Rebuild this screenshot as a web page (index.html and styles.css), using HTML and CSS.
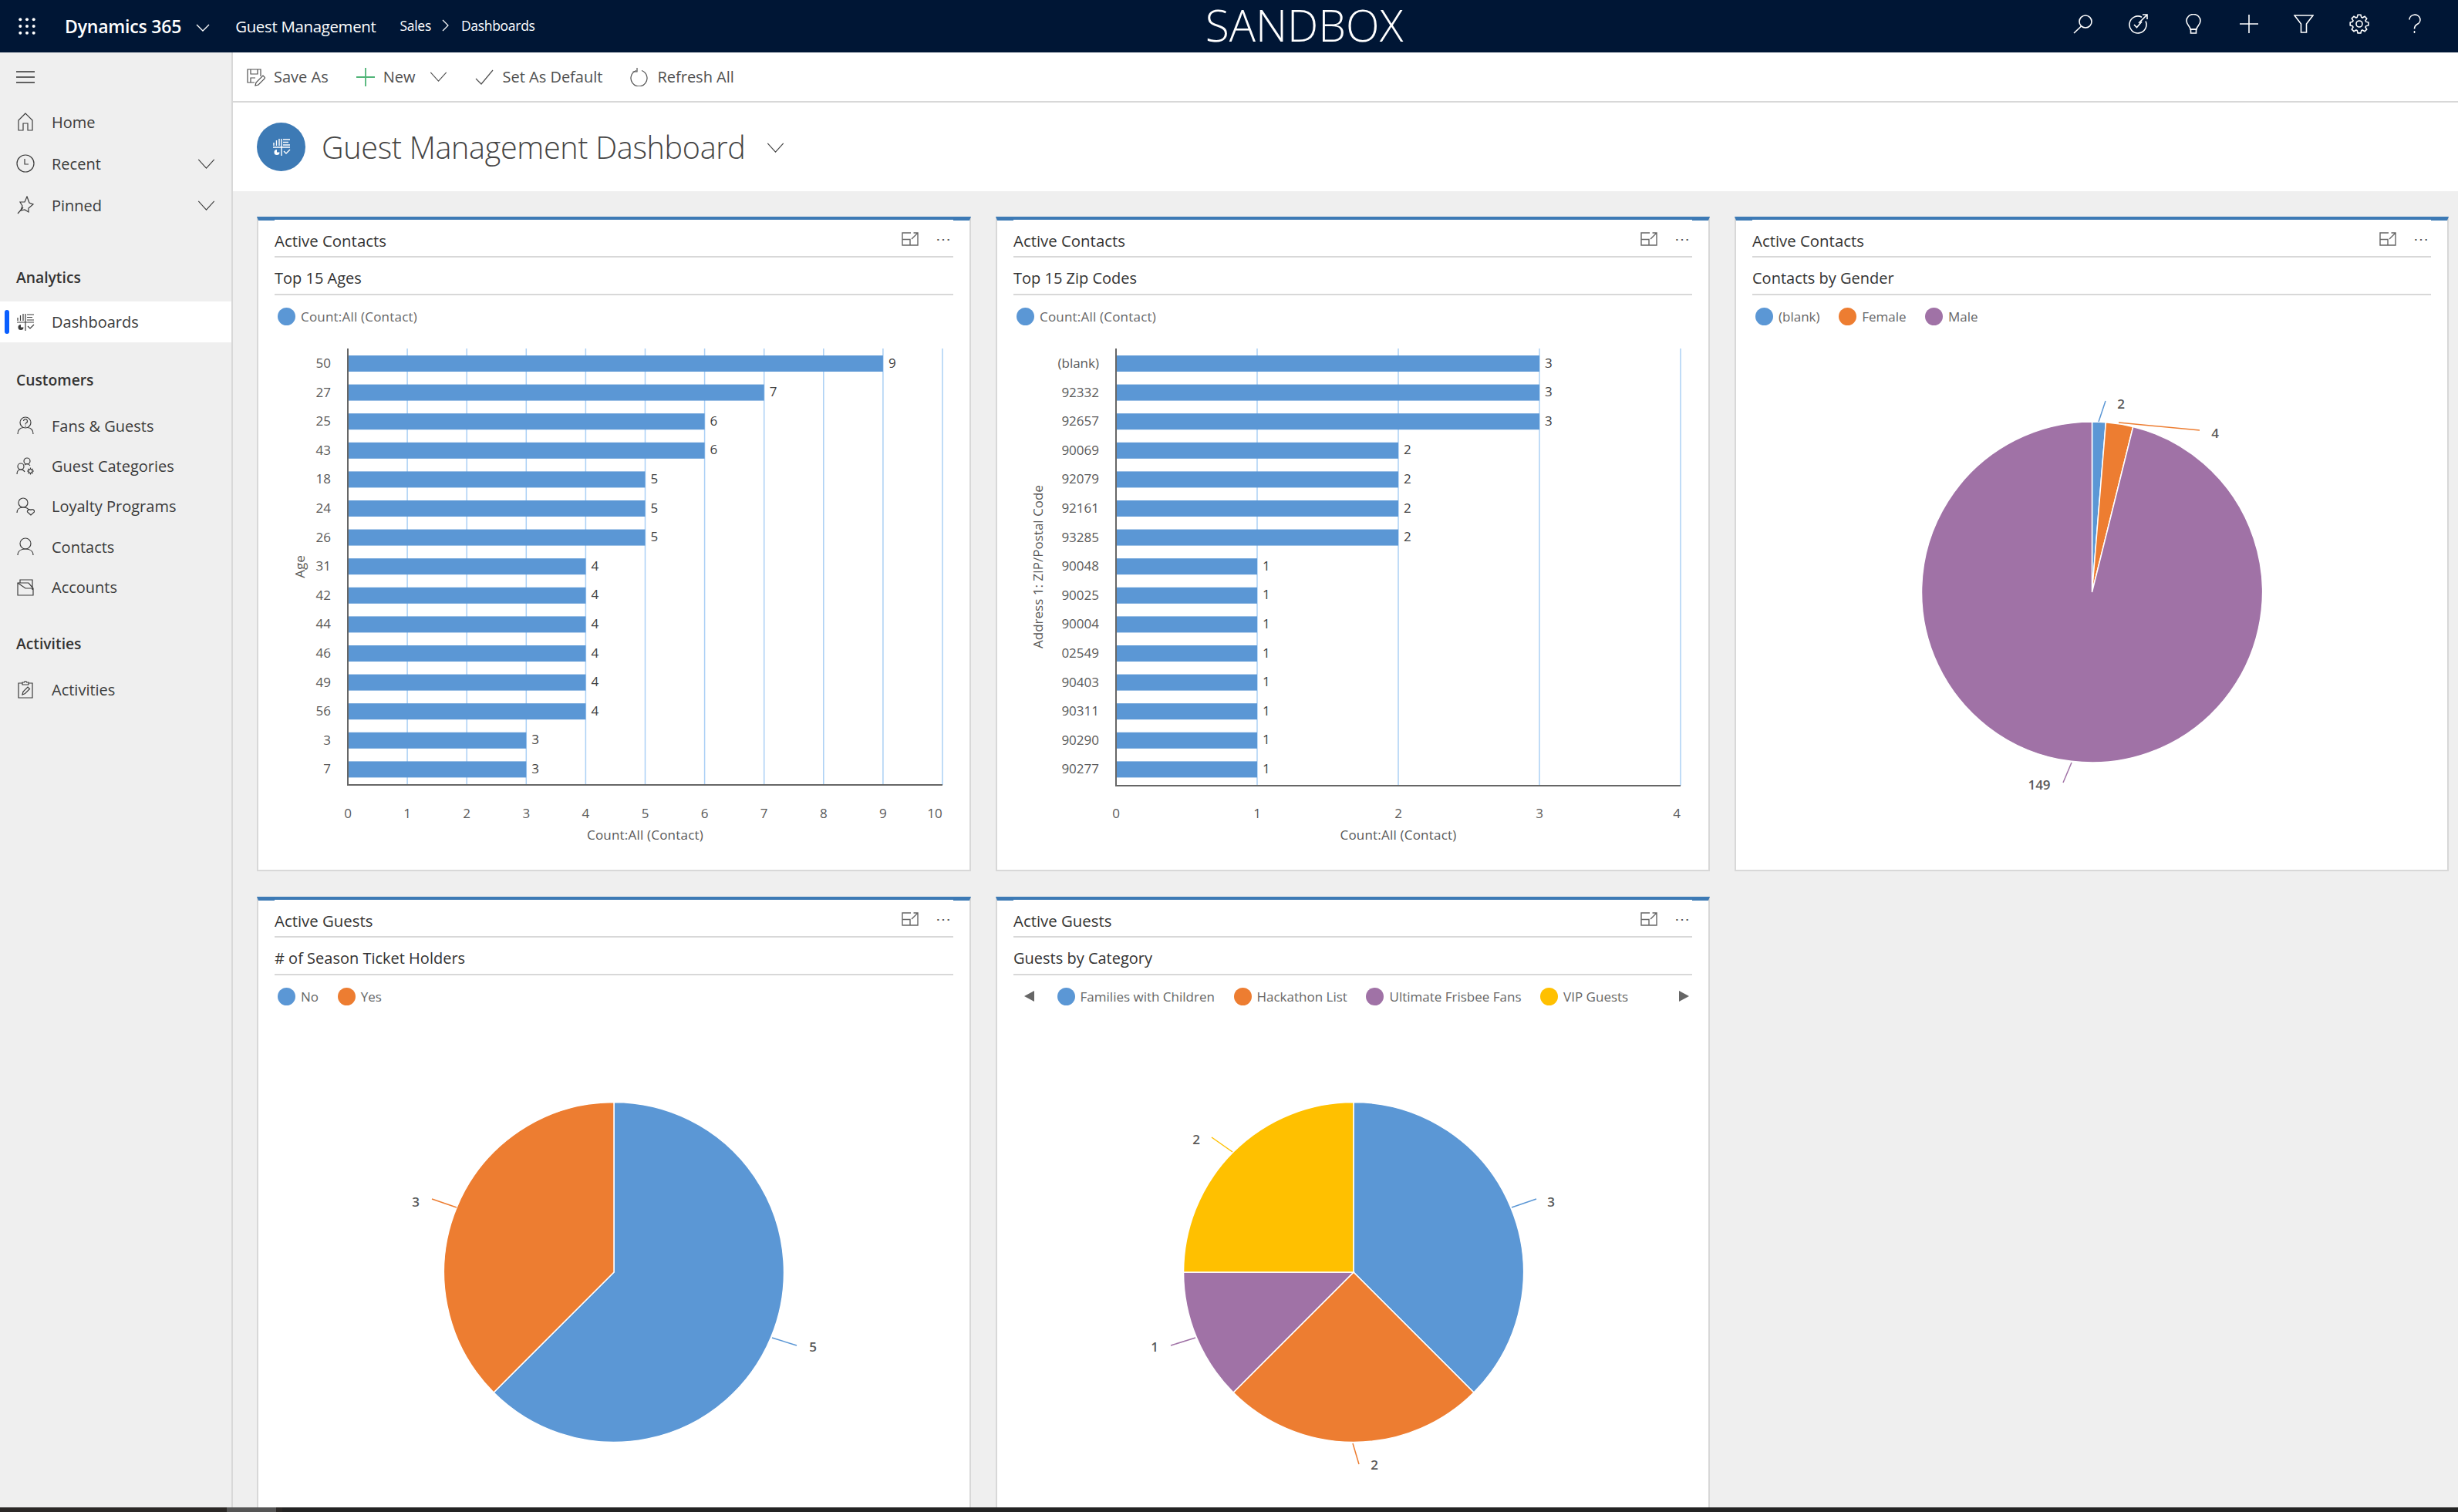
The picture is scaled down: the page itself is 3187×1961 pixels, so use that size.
FILE: index.html
```html
<!DOCTYPE html>
<html lang="en">
<head>
  <meta charset="UTF-8">
  <title>Guest Management Dashboard</title>
  <link rel="stylesheet" href="styles.css">
</head>
<body>

<header class="topbar">
  <svg class="waffle" viewBox="0 0 24 24"><g fill="#fff"><circle cx="2.5" cy="2.5" r="2.2"/><circle cx="12" cy="2.5" r="2.2"/><circle cx="21.5" cy="2.5" r="2.2"/><circle cx="2.5" cy="12" r="2.2"/><circle cx="12" cy="12" r="2.2"/><circle cx="21.5" cy="12" r="2.2"/><circle cx="2.5" cy="21.5" r="2.2"/><circle cx="12" cy="21.5" r="2.2"/><circle cx="21.5" cy="21.5" r="2.2"/></g></svg>
  <span class="brand">Dynamics 365</span>
  <svg class="chev-top" viewBox="0 0 18 10"><polyline points="1,1 9,9 17,1"/></svg>
  <span class="app-name">Guest Management</span>
  <span class="crumb">Sales</span>
  <svg class="crumb-sep" viewBox="0 0 9 16"><polyline points="1,1 8,8 1,15"/></svg>
  <span class="crumb">Dashboards</span>
  <span class="sandbox">SANDBOX</span>
  <div class="top-icons">
    <svg viewBox="0 0 26 26"><circle cx="17" cy="10" r="8"/><line x1="11.5" y1="16" x2="2" y2="25"/></svg>
    <svg viewBox="0 0 26 26"><path d="M18 4.2A11 11 0 1 0 23 9.5"/><path d="M8 14l3.5 3.5L18 10"/><path d="M14 12L25 1M19 1h6v6"/></svg>
    <svg viewBox="0 0 26 26"><path d="M9 20c0-4-5-5.500-5-11a9 8.500 0 0 1 18 0c0 5.500-5 7-5 11z"/><path d="M9.500 20h7v5h-7z"/></svg>
    <svg viewBox="0 0 26 26"><path d="M1 13h24M13 1v24"/></svg>
    <svg viewBox="0 0 26 26"><path d="M1 2h24L16.500 13v11h-7V13z"/></svg>
    <svg viewBox="0 0 26 26"><polygon points="10.2,4.4 11.1,1.2 14.9,1.2 15.8,4.4 17.1,5 20.100,3.300 22.700,6 21,8.900 21.600,10.200 24.900,11.100 24.900,14.900 21.600,15.800 21,17.100 22.700,20.100 20.100,22.700 17.100,21 15.800,21.600 14.900,24.900 11.100,24.900 10.200,21.600 8.900,21 6,22.700 3.300,20.100 5,17.100 4.400,15.800 1.200,14.900 1.200,11.100 4.400,10.200 5,8.900 3.300,6 6,3.300 8.900,5"/><circle cx="13" cy="13" r="4"/></svg>
    <svg viewBox="0 0 26 26"><path d="M6 7.500a7 6.500 0 1 1 10 6c-2.500 1.500-3.500 3-3.500 6"/><path d="M12.500 22v3"/></svg>
  </div>
</header>

<div class="app">
  <aside class="sidebar">
    <div class="hamburger"><svg viewBox="0 0 24 16"><path d="M0 1h24M0 8h24M0 15h24"/></svg></div>

    <div class="nav-top">
      <a class="nav-item tall">
        <svg viewBox="0 0 24 24"><path d="M12 1L3 10v13h6v-9h6v9h6V10z"/></svg>
        Home
      </a>
      <a class="nav-item tall">
        <svg viewBox="0 0 24 24"><circle cx="12" cy="12" r="11"/><path d="M11 6v7h5"/></svg>
        Recent
        <svg class="nav-chev" viewBox="0 0 24 14"><polyline points="1,1 12,13 23,1"/></svg>
      </a>
      <a class="nav-item tall">
        <svg viewBox="0 0 24 24"><path d="M14 1l3 8 5 2-6 5 0 5-5-3-5 1 2-6-3-5 6 0z"/><path d="M9 15l-7 8"/></svg>
        Pinned
        <svg class="nav-chev" viewBox="0 0 24 14"><polyline points="1,1 12,13 23,1"/></svg>
      </a>
    </div>

    <section class="nav-section first">
      <h3>Analytics</h3>
      <a class="nav-item active">
        <svg viewBox="0 0 24 24"><path d="M2 10V6M5.500 10V3M9 10V1M14 2h9M14 5.500h7M14 9h9M1 12h22M12 1v22M15 17l3 3 5-5"/><path class="solid" d="M6 15a3.500 3.500 0 1 0 3.500 3.500H6z"/></svg>
        Dashboards
      </a>
    </section>

    <section class="nav-section">
      <h3>Customers</h3>
      <a class="nav-item">
        <svg viewBox="0 0 24 24"><circle cx="12" cy="8" r="7"/><path d="M2 23c0-6 3-8 7-8.500M22 23c0-6-3-8-7-8.500"/><path d="M9.500 6a2.500 2.500 0 1 1 3.500 2.500c-1 .5-1 1-1 2M12 12v1.500"/></svg>
        Fans &amp; Guests
      </a>
      <a class="nav-item">
        <svg viewBox="0 0 24 24"><circle cx="14" cy="5" r="4"/><circle cx="6" cy="12" r="4"/><path d="M1 22c0-4 2-6 5-6s4 1 5 3M11 10c1-1 2-1.500 3-1.500s3 1 4 2.500"/><circle cx="18.500" cy="18" r="2.500"/><path d="M18.500 13.500v2M18.500 20.500v2M14 18h2M21 18h2M15.500 15l1.500 1.500M20 19.500l1.500 1.500M21.500 15L20 16.500M17 19.500L15.500 21"/></svg>
        Guest Categories
      </a>
      <a class="nav-item">
        <svg viewBox="0 0 24 24"><circle cx="9" cy="7" r="6"/><path d="M1 20c0-4 3-7 8-7s7 2 8 4"/><path d="M19 23l-4.500-4a2.700 2.700 0 0 1 4.500-2.500 2.700 2.700 0 0 1 4.500 2.500z"/></svg>
        Loyalty Programs
      </a>
      <a class="nav-item">
        <svg viewBox="0 0 24 24"><circle cx="12" cy="8" r="7"/><path d="M2 23c0-5 4-8 10-8s10 3 10 8"/></svg>
        Contacts
      </a>
      <a class="nav-item">
        <svg viewBox="0 0 24 24"><path d="M2 6h14l6 7v9H2zM2 6l0 1M5 6V2h16v13"/><path d="M2 6l10 7h10"/></svg>
        Accounts
      </a>
    </section>

    <section class="nav-section last">
      <h3>Activities</h3>
      <a class="nav-item">
        <svg viewBox="0 0 24 24"><path d="M8 4H3v19h18V4h-5"/><path d="M8 6V3h2.500a1.500 1.500 0 0 1 3 0H16v3z"/><path d="M8 19l1-4 6-6 2.500 2.500-6 6z"/></svg>
        Activities
      </a>
    </section>
  </aside>

  <main class="main">
    <div class="toolbar">
      <button class="tool">
        <svg viewBox="0 0 24 24"><path d="M10 19H1V2h17v9M5 2v6h9V2M5 19v-6h6"/><path d="M11 23l1-4 9-9 3 3-9 9z"/></svg>
        Save As
      </button>
      <button class="tool tool-new">
        <svg class="green" viewBox="0 0 24 24"><path d="M0 12h24M12 0v24"/></svg>
        New
        <svg class="tool-chev" viewBox="0 0 24 14"><polyline points="1,1 12,13 23,1"/></svg>
      </button>
      <button class="tool">
        <svg viewBox="0 0 24 24"><polyline points="1,14 8,21 23,3"/></svg>
        Set As Default
      </button>
      <button class="tool">
        <svg viewBox="0 0 24 24"><path d="M8 3.500a10.500 10.500 0 1 0 7 0"/><path d="M9 0v5H3.500"/></svg>
        Refresh All
      </button>
    </div>

    <div class="titlebar">
      <div class="title-badge">
        <svg viewBox="0 0 24 24"><path d="M2 10V6M5.500 10V3M9 10V1M14 2h9M14 5.500h7M14 9h9M1 12h22M12 1v22M15 17l3 3 5-5"/><path class="solid" d="M6 15a3.500 3.500 0 1 0 3.500 3.500H6z"/></svg>
      </div>
      <h1>Guest Management Dashboard</h1>
      <svg class="title-chev" viewBox="0 0 24 14"><polyline points="1,1 12,13 23,1"/></svg>
    </div>

    <div class="cards">
      <article class="card">
        <div class="card-head">
          <h2>Active Contacts</h2>
          <svg class="expand" viewBox="0 0 22 18"><path d="M12 1H1v16h20V6M1 9.500h10V17M13 9l8-8M15.500 1H21v5.500"/></svg>
          <span class="dots">&#8943;</span>
        </div>
        <div class="card-sub">Top 15 Ages</div>
        <div class="legend"><span class="key blue count">Count:All (Contact)</span></div>
        <svg class="chart" id="ages" viewBox="335 430 922 698"></svg>
      </article>

      <article class="card">
        <div class="card-head">
          <h2>Active Contacts</h2>
          <svg class="expand" viewBox="0 0 22 18"><path d="M12 1H1v16h20V6M1 9.500h10V17M13 9l8-8M15.500 1H21v5.500"/></svg>
          <span class="dots">&#8943;</span>
        </div>
        <div class="card-sub">Top 15 Zip Codes</div>
        <div class="legend"><span class="key blue count">Count:All (Contact)</span></div>
        <svg class="chart" id="zips" viewBox="1293 430 922 698"></svg>
      </article>

      <article class="card">
        <div class="card-head">
          <h2>Active Contacts</h2>
          <svg class="expand" viewBox="0 0 22 18"><path d="M12 1H1v16h20V6M1 9.500h10V17M13 9l8-8M15.500 1H21v5.500"/></svg>
          <span class="dots">&#8943;</span>
        </div>
        <div class="card-sub">Contacts by Gender</div>
        <div class="legend">
          <span class="key blue">(blank)</span>
          <span class="key orange">Female</span>
          <span class="key purple">Male</span>
        </div>
        <svg class="chart" id="gender" viewBox="2250 430 922 698"></svg>
      </article>

      <article class="card">
        <div class="card-head">
          <h2>Active Guests</h2>
          <svg class="expand" viewBox="0 0 22 18"><path d="M12 1H1v16h20V6M1 9.500h10V17M13 9l8-8M15.500 1H21v5.500"/></svg>
          <span class="dots">&#8943;</span>
        </div>
        <div class="card-sub"># of Season Ticket Holders</div>
        <div class="legend">
          <span class="key blue">No</span>
          <span class="key orange">Yes</span>
        </div>
        <svg class="chart" id="season" viewBox="335 1312 922 643"></svg>
      </article>

      <article class="card">
        <div class="card-head">
          <h2>Active Guests</h2>
          <svg class="expand" viewBox="0 0 22 18"><path d="M12 1H1v16h20V6M1 9.500h10V17M13 9l8-8M15.500 1H21v5.500"/></svg>
          <span class="dots">&#8943;</span>
        </div>
        <div class="card-sub">Guests by Category</div>
        <div class="legend paged">
          <span class="arrow left"></span>
          <span class="key blue">Families with Children</span>
          <span class="key orange">Hackathon List</span>
          <span class="key purple">Ultimate Frisbee Fans</span>
          <span class="key yellow">VIP Guests</span>
          <span class="arrow right"></span>
        </div>
        <svg class="chart" id="category" viewBox="1293 1312 922 643"></svg>
      </article>
    </div>
  </main>
</div>

<div class="taskbar"><span class="tb-thumb"></span><span class="tb-sep"></span></div>

<script src="charts.js"></script>
</body>
</html>
```

FILE: styles.css
```css
:root {
  --navy: #001635;
  --blue: #3d7ab5;
  --line: #d8d8d8;
  --panel: #efefef;
  --text: #333;
  --muted: #666;
}

* {
  box-sizing: border-box;
  margin: 0;
  padding: 0;
}

body {
  font-family: "Open Sans", "Noto Sans", sans-serif;
  color: var(--text);
  background: var(--panel);
  height: 100vh;
  overflow: hidden;
  display: flex;
  flex-direction: column;
}

svg {
  flex: none;
  fill: none;
  stroke: currentColor;
}

/* top bar */
.topbar {
  position: relative;
  height: 68px;
  flex: none;
  background: var(--navy);
  color: #fff;
  display: flex;
  align-items: center;
  padding-left: 24px;
}

.waffle {
  width: 22px;
  height: 22px;
  stroke: none;
  margin-right: 38px;
}

.brand {
  font-size: 23px;
  font-weight: 600;
  letter-spacing: -0.2px;
}

.chev-top {
  width: 18px;
  height: 10px;
  stroke-width: 1.3;
  margin: 3px 33px 0 19px;
}

.app-name {
  font-size: 20.4px;
  font-weight: 500;
  letter-spacing: -0.3px;
  margin-right: 31px;
}

.crumb {
  font-size: 17.5px;
  letter-spacing: -0.3px;
  padding-bottom: 3px;
}

.crumb-sep {
  width: 9px;
  height: 16px;
  stroke-width: 1.2;
  margin: 0 16px 3px 14px;
}

.sandbox {
  position: absolute;
  left: 1551px;
  top: 0;
  width: 280px;
  text-align: center;
  font-size: 57px;
  font-weight: 300;
  line-height: 64px;
  white-space: nowrap;
}

.top-icons {
  margin-left: auto;
  margin-right: 43px;
  padding-bottom: 6px;
  display: flex;
  gap: 45.8px;
}

.top-icons svg {
  width: 26px;
  height: 26px;
  stroke-width: 1.6;
}

/* sidebar */
.app {
  flex: 1;
  min-height: 0;
  display: flex;
}

.sidebar {
  width: 302px;
  flex: none;
  border-right: 2px solid var(--line);
}

.hamburger {
  height: 63px;
  display: flex;
  align-items: center;
  padding-left: 21px;
}

.hamburger svg {
  width: 24px;
  height: 16px;
  stroke-width: 1.5;
}

.nav-item {
  position: relative;
  height: 52.4px;
  display: flex;
  align-items: center;
  gap: 22px;
  padding-left: 21px;
  font-size: 20px;
  color: #3c3c3c;
}

.nav-item.tall {
  height: 54px;
}

.nav-item > svg {
  width: 24px;
  height: 24px;
  stroke-width: 1.2;
}

.nav-item .nav-chev {
  width: 23px;
  height: 13px;
  margin-left: auto;
  margin-right: 21px;
}

.nav-item.active {
  background: #fff;
  height: 53px;
}

.nav-item.active::before {
  content: "";
  position: absolute;
  left: 6px;
  top: 11px;
  width: 6px;
  height: 31px;
  border-radius: 3px;
  background: #0a5fff;
}

.solid {
  fill: currentColor;
  stroke: none;
}

.nav-section {
  margin-top: 26px;
}

.nav-section.first {
  margin-top: 44px;
}

.nav-section.last {
  margin-top: 24px;
}

.nav-section h3 {
  height: 46px;
  line-height: 46px;
  margin-bottom: 10px;
  padding-left: 21px;
  font-size: 19.3px;
  font-weight: 600;
  color: #333;
}

.nav-section.first h3 {
  margin-bottom: 8px;
}

/* toolbar and title */
.main {
  flex: 1;
  min-width: 0;
  display: flex;
  flex-direction: column;
}

.toolbar {
  height: 65px;
  flex: none;
  padding-left: 18px;
  background: #fff;
  border-bottom: 2px solid var(--line);
  display: flex;
  align-items: center;
  gap: 36px;
}

.tool {
  font: inherit;
  font-size: 20px;
  color: #505050;
  background: none;
  border: 0;
  display: flex;
  align-items: center;
  gap: 11px;
}

.tool svg {
  width: 24px;
  height: 24px;
  stroke-width: 1.2;
}

.tool svg.green {
  color: #4fb477;
  stroke-width: 1.8;
}

.tool svg.tool-chev {
  width: 23px;
  height: 13px;
  margin-left: 8px;
}

.titlebar {
  height: 115px;
  flex: none;
  padding-left: 31px;
  background: #fff;
  display: flex;
  align-items: center;
}

.title-badge {
  width: 63px;
  height: 63px;
  border-radius: 50%;
  background: var(--blue);
  color: #fff;
  display: flex;
  align-items: center;
  justify-content: center;
  margin-right: 21px;
}

.title-badge svg {
  width: 24px;
  height: 24px;
  stroke-width: 1.4;
}

h1 {
  font-size: 39.5px;
  font-weight: 300;
  color: #444;
  letter-spacing: -0.3px;
}

.title-chev {
  width: 23px;
  height: 13px;
  margin-left: 27px;
  margin-top: 2px;
  stroke-width: 1.3;
  color: #444;
}

/* dashboard cards */
.cards {
  flex: 1;
  min-height: 0;
  overflow: hidden;
  padding: 33px 0 0 31px;
  display: grid;
  grid-template-columns: repeat(3, 926px);
  grid-template-rows: 849px 849px;
  column-gap: 32px;
  row-gap: 33px;
}

.card {
  position: relative;
  background: #fff;
  border: 2px solid var(--line);
  border-top: 5px solid var(--blue);
}

.card::before {
  content: "";
  position: absolute;
  top: -1px;
  left: 21px;
  right: 21px;
  height: 1px;
  background: #fff;
}

.card-head {
  height: 48px;
  margin: 0 21px;
  padding-top: 5px;
  border-bottom: 2px solid var(--line);
  display: flex;
  align-items: center;
}

.card-head h2 {
  font-size: 20.4px;
  font-weight: 400;
  flex: 1;
}

.expand {
  width: 22px;
  height: 18px;
  margin-bottom: 3px;
  stroke: #666;
  stroke-width: 1.4;
}

.dots {
  width: 20px;
  margin-left: 22px;
  margin-right: 3px;
  font-size: 20px;
  color: #555;
  text-align: center;
  line-height: 1;
  padding-bottom: 3px;
}

.card-sub {
  height: 49px;
  margin: 0 21px;
  padding-top: 5px;
  border-bottom: 2px solid var(--line);
  font-size: 20px;
  display: flex;
  align-items: center;
}

.legend {
  height: 47px;
  padding-left: 25px;
  padding-top: 7px;
  display: flex;
  align-items: center;
  gap: 24.6px;
  font-size: 17px;
  color: var(--muted);
}

.key {
  display: flex;
  align-items: center;
  gap: 7px;
  white-space: nowrap;
}

.key.count {
  letter-spacing: 0.2px;
}

.key::before {
  content: "";
  width: 23px;
  height: 23px;
  border-radius: 50%;
}

.key.blue::before { background: #5b97d5; }
.key.orange::before { background: #ed7d31; }
.key.purple::before { background: #a072a6; }
.key.yellow::before { background: #ffc000; }

.legend.paged {
  padding-left: 35px;
  padding-right: 25px;
}

.arrow {
  width: 0;
  height: 0;
  border-top: 7px solid transparent;
  border-bottom: 7px solid transparent;
}

.arrow.left {
  border-right: 13px solid #666;
  margin-right: 5px;
}

.arrow.right {
  border-left: 13px solid #666;
  margin-left: auto;
}

.chart {
  display: block;
  width: 922px;
  stroke: none;
}

#ages, #zips, #gender {
  height: 698px;
}

#season, #category {
  height: 643px;
}

.chart text {
  font-size: 17px;
  fill: #595959;
}

.chart .value {
  fill: #404040;
}

.chart .axis-title {
  letter-spacing: 0.2px;
}

.chart .pie-label {
  font-weight: 600;
}

/* strip of the desktop below the window */
.taskbar {
  height: 6px;
  flex: none;
  background: #2b2826;
  display: flex;
}

.tb-thumb {
  margin-left: 294px;
  width: 64px;
  background: #555;
}

.tb-sep {
  flex: 1;
  margin-left: 8px;
  background: #232323;
}
```

FILE: charts.js
```js
const NS = "http://www.w3.org/2000/svg";
const COLORS = { blue: "#5b97d5", orange: "#ed7d31", purple: "#a072a6", yellow: "#ffc000" };

function add(svg, tag, attrs, text) {
  const el = document.createElementNS(NS, tag);
  Object.keys(attrs).forEach(k => el.setAttribute(k, attrs[k]));
  if (text !== undefined) el.textContent = text;
  svg.appendChild(el);
  return el;
}

function barChart(id, opt) {
  const svg = document.getElementById(id);
  const { x0, unit, max, top, bottom, rows } = opt;

  for (let i = 1; i <= max; i++) {
    const x = x0 + i * unit;
    add(svg, "line", { x1: x, x2: x, y1: top, y2: bottom, stroke: "#abd0f5", "stroke-width": 1.5 });
  }

  rows.forEach((row, i) => {
    const y = 461 + i * 37.6;
    const w = row[1] * unit;
    add(svg, "rect", { x: x0, y: y, width: w, height: 21, fill: COLORS.blue });
    add(svg, "text", { x: opt.labelX, y: y + 16, "text-anchor": "end" }, row[0]);
    add(svg, "text", { x: x0 + w + 7, y: y + 15.5, class: "value" }, row[1]);
  });

  add(svg, "path", { d: `M${x0} ${top}V${bottom}H${x0 + max * unit}`, stroke: "#666", "stroke-width": 2, fill: "none" });

  for (let i = 0; i <= max; i++) {
    const x = i === max && max > 9 ? x0 + i * unit - 10 : x0 + i * unit;
    add(svg, "text", { x: i === max && max < 9 ? x - 5 : x, y: 1061, "text-anchor": "middle" }, i);
  }

  add(svg, "text", { x: x0 + max * unit / 2, y: 1089, "text-anchor": "middle", class: "axis-title" }, "Count:All (Contact)");
  add(svg, "text", {
    x: opt.titleX, y: 735, "text-anchor": "middle",
    transform: `rotate(-90 ${opt.titleX} 735)`, "dominant-baseline": "central"
  }, opt.title);
}

function pieChart(id, cx, cy, r, slices, leaders) {
  const svg = document.getElementById(id);
  const total = slices.reduce((sum, s) => sum + s[0], 0);
  let from = 0;

  slices.forEach(s => {
    const to = from + s[0] / total * Math.PI * 2;
    const x1 = cx + r * Math.sin(from), y1 = cy - r * Math.cos(from);
    const x2 = cx + r * Math.sin(to), y2 = cy - r * Math.cos(to);
    const big = to - from > Math.PI ? 1 : 0;
    add(svg, "path", {
      d: `M${cx} ${cy}L${x1} ${y1}A${r} ${r} 0 ${big} 1 ${x2} ${y2}Z`,
      fill: COLORS[s[1]], stroke: "#fff", "stroke-width": 1.5
    });
    from = to;
  });

  leaders.forEach(l => {
    add(svg, "line", { x1: l.from[0], y1: l.from[1], x2: l.to[0], y2: l.to[1], stroke: COLORS[l.color], "stroke-width": 1.5 });
    add(svg, "text", { x: l.at[0], y: l.at[1] + 6, "text-anchor": "middle", class: "pie-label" }, l.text);
  });
}

barChart("ages", {
  x0: 451, unit: 77.1, max: 10, top: 452, bottom: 1018, labelX: 429, titleX: 388, title: "Age",
  rows: [["50", 9], ["27", 7], ["25", 6], ["43", 6], ["18", 5], ["24", 5], ["26", 5], ["31", 4],
    ["42", 4], ["44", 4], ["46", 4], ["49", 4], ["56", 4], ["3", 3], ["7", 3]]
});

barChart("zips", {
  x0: 1447, unit: 183, max: 4, top: 452, bottom: 1019, labelX: 1425, titleX: 1345, title: "Address 1: ZIP/Postal Code",
  rows: [["(blank)", 3], ["92332", 3], ["92657", 3], ["90069", 2], ["92079", 2], ["92161", 2], ["93285", 2],
    ["90048", 1], ["90025", 1], ["90004", 1], ["02549", 1], ["90403", 1], ["90311", 1], ["90290", 1], ["90277", 1]]
});

pieChart("gender", 2711.5, 768, 221, [[2, "blue"], [4, "orange"], [149, "purple"]], [
  { from: [2720, 547], to: [2729, 520], at: [2749, 524], color: "blue", text: "2" },
  { from: [2746, 548], to: [2851, 558], at: [2871, 562], color: "orange", text: "4" },
  { from: [2685, 989], to: [2674, 1015], at: [2643, 1018], color: "purple", text: "149" }
]);

pieChart("season", 796, 1650, 220.5, [[5, "blue"], [3, "orange"]], [
  { from: [1001, 1735], to: [1033, 1745], at: [1054, 1747], color: "blue", text: "5" },
  { from: [592, 1566], to: [560, 1555], at: [539, 1559], color: "orange", text: "3" }
]);

pieChart("category", 1755, 1650, 220.5, [[3, "blue"], [2, "orange"], [1, "purple"], [2, "yellow"]], [
  { from: [1960, 1566], to: [1992, 1555], at: [2011, 1559], color: "blue", text: "3" },
  { from: [1754, 1872], to: [1762, 1899], at: [1782, 1900], color: "orange", text: "2" },
  { from: [1550, 1735], to: [1518, 1745], at: [1497, 1747], color: "purple", text: "1" },
  { from: [1598, 1494], to: [1571, 1475], at: [1551, 1478], color: "yellow", text: "2" }
]);
```
